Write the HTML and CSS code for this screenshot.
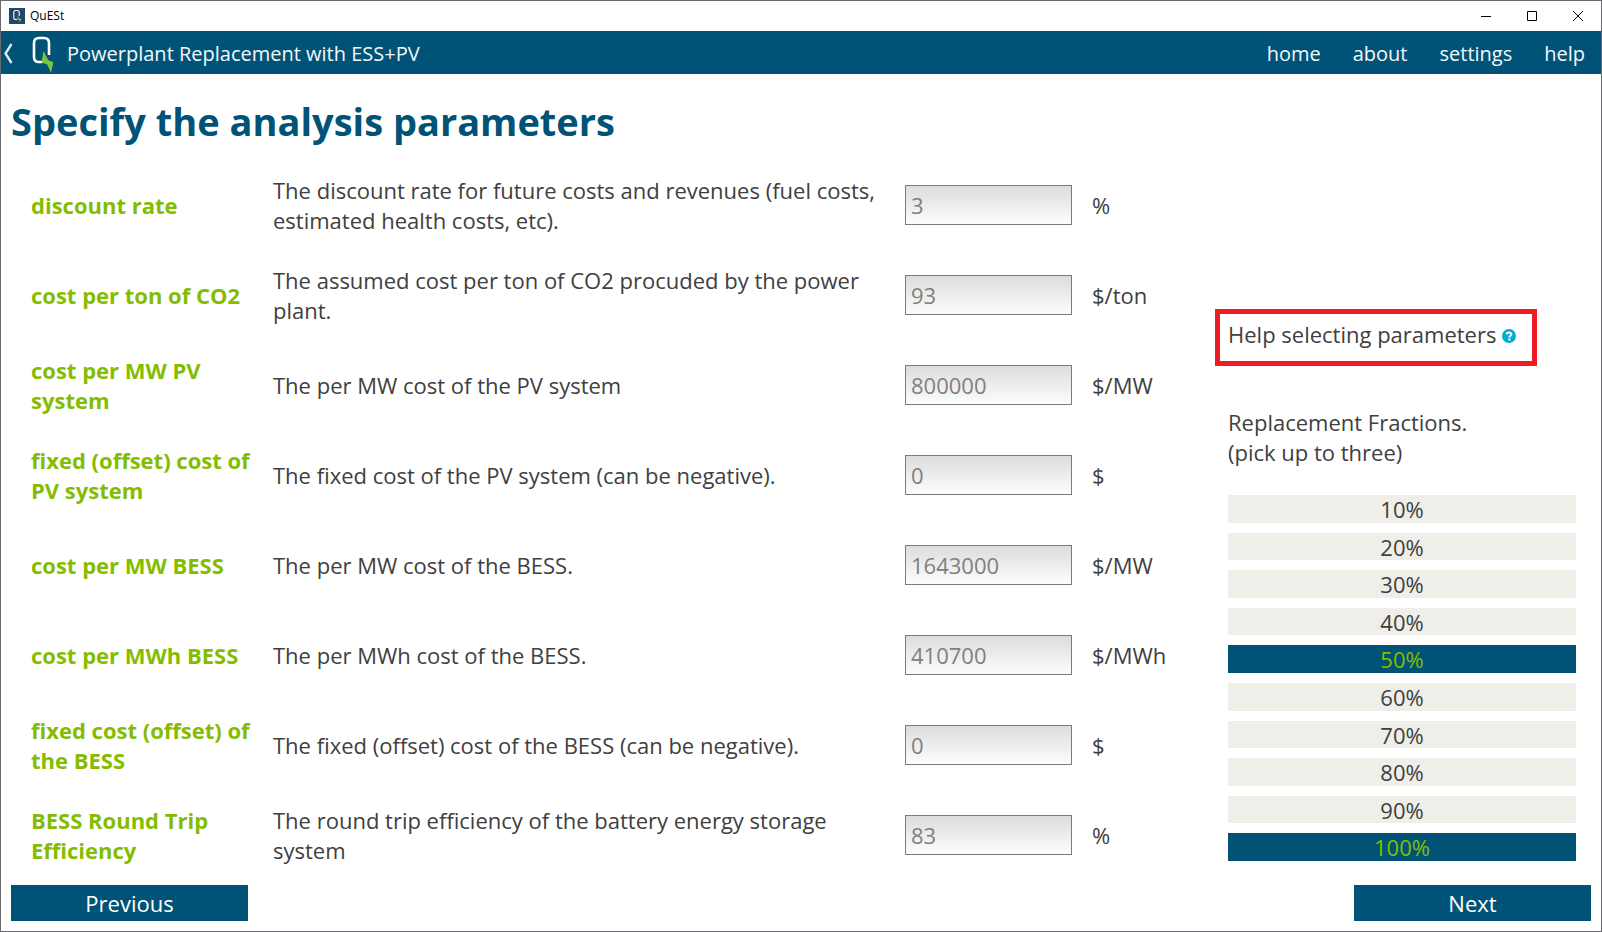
FILE: index.html
```html
<!DOCTYPE html>
<html lang="en">
<head>
<meta charset="utf-8">
<title>QuESt</title>
<link rel="stylesheet" href="styles.css">
</head>
<body>
<div class="window">
  <div class="titlebar">
    <svg class="app-icon" viewBox="0 0 16 16" aria-hidden="true">
      <rect width="16" height="16" fill="#22476b"/>
      <path d="M8 11.500H6.500Q4.800 11.500 4.800 9.500V4.500Q4.800 2.500 6.800 2.500H8.200Q10.200 2.500 10.200 4.500V8" fill="none" stroke="#fff" stroke-width="1.100"/>
      <path d="M8.800 8 8.200 11.400 10 11.800 10.800 14.500 12.300 11 10.300 10.400z" fill="#7fc241"/>
    </svg>
    <span class="app-name">QuESt</span>
    <div class="window-controls">
      <button class="window-button" aria-label="Minimize"><svg viewBox="0 0 10 10"><path d="M0 5.5H10"/></svg></button>
      <button class="window-button" aria-label="Maximize"><svg viewBox="0 0 10 10"><path d="M.5 .5H9.500V9.500H.5z"/></svg></button>
      <button class="window-button" aria-label="Close"><svg viewBox="0 0 10 10"><path d="M0 0 10 10M10 0 0 10"/></svg></button>
    </div>
  </div>

  <header class="navbar">
    <button class="back" aria-label="Back"><svg viewBox="0 0 10 22"><path d="M8.500 1 2.500 10.500 8.500 20"/></svg></button>
    <svg class="logo" viewBox="0 0 22 38" aria-hidden="true">
      <path d="M10.500 27H7Q2 27 2 22V8Q2 3 7 3H12Q17 3 17 8V20" fill="none" stroke="#fff" stroke-width="2.600"/>
      <path d="M11.500 16 9.500 27.500 15.300 29.500 19 38 21.300 27.300 16.200 25z" fill="#7fc241"/>
    </svg>
    <span class="screen-name">Powerplant Replacement with ESS+PV</span>
    <nav class="menu">
      <a href="#home">home</a>
      <a href="#about">about</a>
      <a href="#settings">settings</a>
      <a href="#help">help</a>
    </nav>
  </header>

  <main class="content">
    <h1 class="heading">Specify the analysis parameters</h1>
    <div class="panels">
      <form class="parameters">
        <div class="row"><label class="name" for="discount">discount rate</label><p class="description">The discount rate for future costs and revenues (fuel costs, estimated health costs, etc).</p><input class="field" id="discount" type="text" value="3"><span class="unit">%</span></div>
        <div class="row"><label class="name" for="co2">cost per ton of CO2</label><p class="description">The assumed cost per ton of CO2 procuded by the power plant.</p><input class="field" id="co2" type="text" value="93"><span class="unit">$/ton</span></div>
        <div class="row"><label class="name" for="pv-mw">cost per MW PV system</label><p class="description">The per MW cost of the PV system</p><input class="field" id="pv-mw" type="text" value="800000"><span class="unit">$/MW</span></div>
        <div class="row"><label class="name" for="pv-fixed">fixed (offset) cost of PV system</label><p class="description">The fixed cost of the PV system (can be negative).</p><input class="field" id="pv-fixed" type="text" value="0"><span class="unit">$</span></div>
        <div class="row"><label class="name" for="bess-mw">cost per MW BESS</label><p class="description">The per MW cost of the BESS.</p><input class="field" id="bess-mw" type="text" value="1643000"><span class="unit">$/MW</span></div>
        <div class="row"><label class="name" for="bess-mwh">cost per MWh BESS</label><p class="description">The per MWh cost of the BESS.</p><input class="field" id="bess-mwh" type="text" value="410700"><span class="unit">$/MWh</span></div>
        <div class="row"><label class="name" for="bess-fixed">fixed cost (offset) of the BESS</label><p class="description">The fixed (offset) cost of the BESS (can be negative).</p><input class="field" id="bess-fixed" type="text" value="0"><span class="unit">$</span></div>
        <div class="row"><label class="name" for="efficiency">BESS Round Trip Efficiency</label><p class="description">The round trip efficiency of the battery energy storage system</p><input class="field" id="efficiency" type="text" value="83"><span class="unit">%</span></div>
      </form>

      <aside class="side">
        <a class="help-link" href="#parameters-help">Help selecting parameters
          <svg class="help-icon" viewBox="0 0 14 14" aria-hidden="true">
            <circle cx="7" cy="7" r="7" fill="#00add0"/>
            <path d="M4.600 5.300C4.800 2.900 9.500 3 9.400 5.300 9.300 6.800 7.300 6.700 7.300 8.500" fill="none" stroke="#fff" stroke-width="2"/>
            <rect x="6.200" y="9.500" width="2.200" height="2" fill="#fff"/>
          </svg>
        </a>
        <p class="fractions-title" id="fractions-title">Replacement Fractions.<br>(pick up to three)</p>
        <div class="fractions" role="group" aria-labelledby="fractions-title">
          <button class="fraction" aria-pressed="false">10%</button>
          <button class="fraction" aria-pressed="false">20%</button>
          <button class="fraction" aria-pressed="false">30%</button>
          <button class="fraction" aria-pressed="false">40%</button>
          <button class="fraction" aria-pressed="true">50%</button>
          <button class="fraction" aria-pressed="false">60%</button>
          <button class="fraction" aria-pressed="false">70%</button>
          <button class="fraction" aria-pressed="false">80%</button>
          <button class="fraction" aria-pressed="false">90%</button>
          <button class="fraction" aria-pressed="true">100%</button>
        </div>
      </aside>
    </div>
    <footer class="actions">
      <button class="action">Previous</button>
      <button class="action">Next</button>
    </footer>
  </main>
</div>
</body>
</html>
```
FILE: styles.css
```css
* { box-sizing: border-box; }

body {
  margin: 0;
  font-family: "Open Sans", "Noto Sans", sans-serif;
  font-size: 22px;
  line-height: 30px;
  color: #404040;
  background: #fff;
}

button, input { font: inherit; border: 0; margin: 0; padding: 0; border-radius: 0; }
p { margin: 0; }
a { color: inherit; text-decoration: none; }

.window {
  display: flex;
  flex-direction: column;
  min-height: 100vh;
  border: 1px solid #6b6b6f;
}

.titlebar {
  display: flex;
  align-items: center;
  height: 30px;
  padding-left: 8px;
}
.app-icon { width: 16px; height: 16px; }
.app-name { margin-left: 5px; font-size: 12px; line-height: 16px; color: #000; }
.window-controls { display: flex; margin-left: auto; }
.window-button { display: flex; align-items: center; justify-content: center; width: 46px; height: 28px; background: none; }
.window-button svg { width: 10px; height: 10px; overflow: visible; fill: none; stroke: #000; stroke-width: 1; }

.navbar {
  display: flex;
  align-items: center;
  height: 43px;
  padding: 2px 16px 0 2px;
  background: #005376;
  color: #f4f8fa;
  font-size: 20px;
}
.back { display: flex; width: 10px; height: 22px; background: none; }
.back svg { width: 10px; height: 22px; fill: none; stroke: #dfeaf0; stroke-width: 2.4; }
.logo { width: 22px; height: 38px; margin-left: 19px; }
.screen-name { margin-left: 13px; }
.menu { display: flex; gap: 32px; margin-left: auto; }

.content {
  display: flex;
  flex: 1;
  flex-direction: column;
  padding: 10px;
}
.heading {
  margin: 0;
  padding: 13px 0 15px;
  font-size: 38px;
  line-height: 48px;
  font-weight: 700;
  color: #005376;
}

.panels {
  display: flex;
  flex: 1;
  gap: 20px;
  padding: 0 15px 0 20px;
}
.parameters { display: flex; flex: 1; flex-direction: column; }
.row {
  display: grid;
  grid-template-columns: 222px 1fr 167px 103px;
  column-gap: 20px;
  align-items: center;
  min-height: 90px;
}
.name { font-weight: 700; color: #84bd00; }
.field {
  width: 100%;
  height: 40px;
  padding: 0 5px;
  border: 1px solid #7b7b7b;
  background: linear-gradient(#dcdcdc, #fdfdfd);
  color: #808080;
}

.side {
  display: flex;
  flex-direction: column;
  justify-content: flex-end;
  width: 361px;
  padding-bottom: 19px;
}
.help-link {
  align-self: flex-start;
  margin-bottom: 41px;
  padding: 5px 16px 12px 8px;
  border: 5px solid #ed1c24;
}
.help-icon { width: 14px; height: 14px; }
.fractions-title { margin: 0 0 28px 13px; }
.fractions { display: grid; gap: 10px; height: 366px; grid-auto-rows: 1fr; margin-left: 13px; }
.fraction { min-height: 0; background: #efeee9; color: #404040; line-height: 28px; }
.fraction[aria-pressed="true"] { background: #005376; color: #84bd00; }

.actions { display: flex; justify-content: space-between; padding-top: 5px; }
.action { width: 237px; height: 36px; background: #005376; color: #fff; }
```
